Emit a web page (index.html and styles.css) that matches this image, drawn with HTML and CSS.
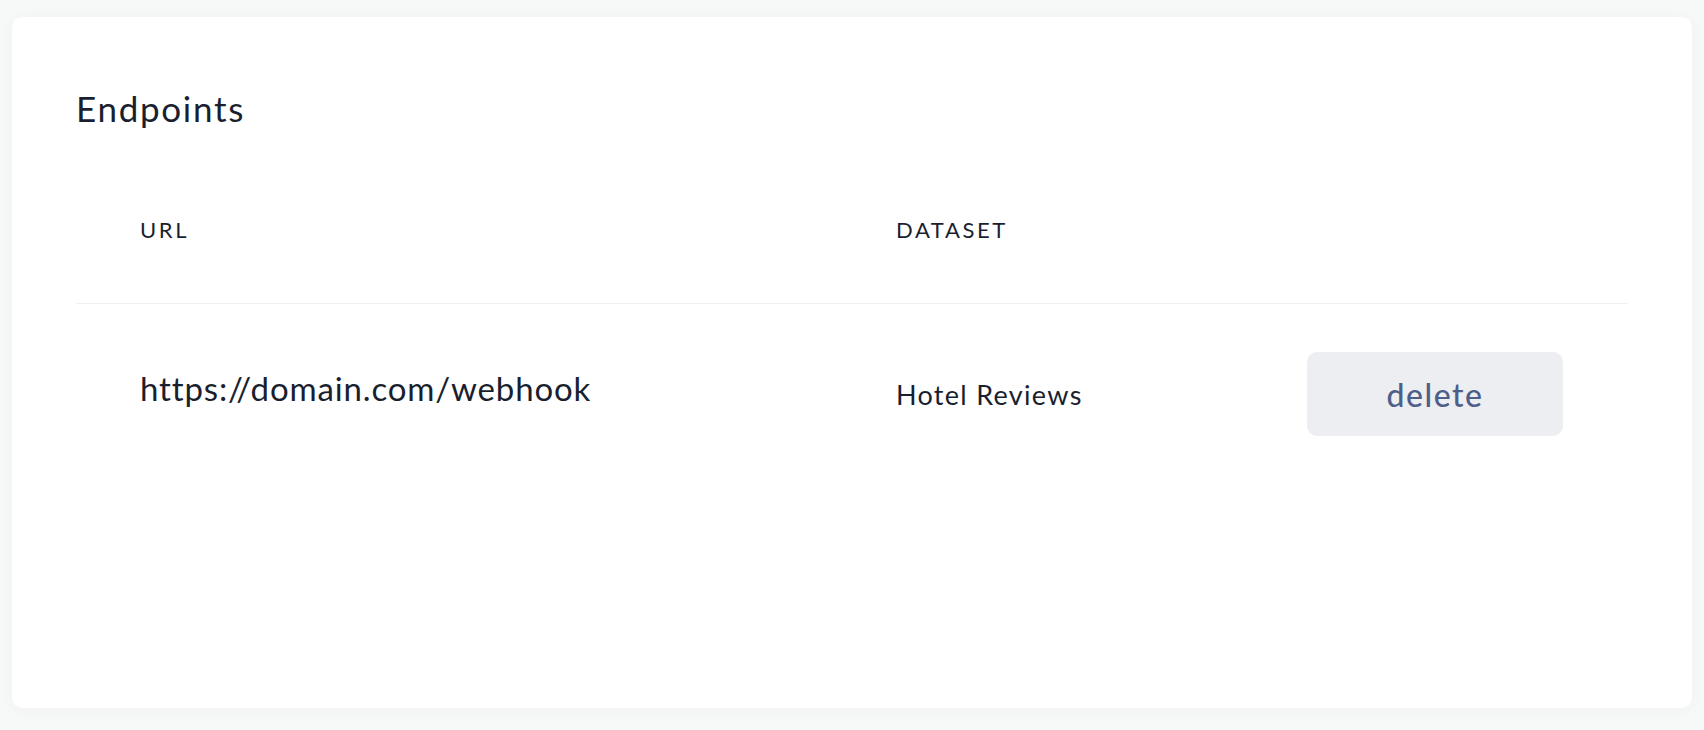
FILE: index.html
```html
<!DOCTYPE html>
<html>
<head>
<meta charset="utf-8">
<link rel="stylesheet" href="styles.css">
</head>
<body>
<div class="card">
  <h2 class="title">Endpoints</h2>
  <div class="table">
    <div class="row head">
      <div class="cell th">URL</div>
      <div class="cell th">DATASET</div>
      <div class="cell"></div>
    </div>
    <div class="row body">
      <div class="cell url">https://domain.com/webhook</div>
      <div class="cell ds">Hotel Reviews</div>
      <div class="cell"><button class="btn">delete</button></div>
    </div>
  </div>
</div>
</body>
</html>
```
FILE: styles.css
```css
html, body { margin: 0; padding: 0; }
body {
  background: #f7f8f8;
  padding: 17px 12px 22px;
  font-family: Lato, "Noto Sans", sans-serif;
  color: #1a1f2f;
  height: 730px;
  box-sizing: border-box;
}
.card {
  background: #fff;
  border-radius: 10px;
  height: 691px;
  box-sizing: border-box;
  padding: 0 64px;
  box-shadow: 0 2px 18px rgba(0,0,0,0.035);
}
.title {
  margin: 0;
  padding-top: 70px;
  font-size: 35px;
  font-weight: 400;
  line-height: 42px;
  letter-spacing: 1.7px;
}
.row {
  display: grid;
  grid-template-columns: 756px 411px 1fr;
  align-items: center;
}
.cell { padding-left: 64px; }
.head {
  padding: 88px 0 60px;
  border-bottom: 1px solid #eef0f3;
}
.th {
  font-size: 22px;
  line-height: 26px;
  letter-spacing: 2.6px;
}
.body { padding-top: 48px; }
.url { font-size: 33px; margin-bottom: 12px; letter-spacing: 0.85px; }
.ds { font-size: 27px; letter-spacing: 1.3px; }
.btn {
  width: 256px;
  height: 84px;
  border: 0;
  border-radius: 10px;
  background: #edeef2;
  color: #4e5e88;
  font-family: Lato, "Noto Sans", sans-serif;
  font-size: 32px;
  font-weight: 500;
  letter-spacing: 1.5px;
  padding: 0;
}
```
